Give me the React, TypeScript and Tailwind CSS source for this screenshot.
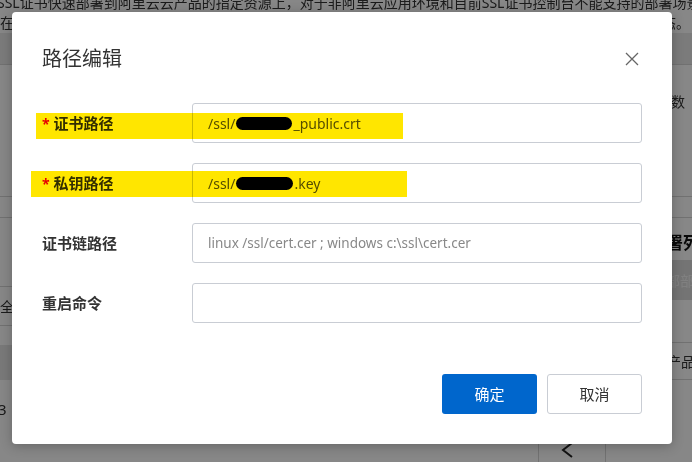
import React from "react";

const fontStack = "font-['Noto_Sans','Noto_Sans_CJK_SC',sans-serif]";

const BackgroundPage = () => {
  return (
    <div className="flex h-full flex-col text-[#333]">
      <div className="-mt-[7px] flex flex-col text-[14px] leading-[20px]">
        <p className="-ml-[3px] whitespace-nowrap">
          SSL证书快速部署到阿里云云产品的指定资源上，对于非阿里云应用环境和目前SSL证书控制台不能支持的部署场景
        </p>
        <div className="flex justify-between whitespace-nowrap pr-[2px]">
          <span>在</span>
          <span>状态。</span>
        </div>
      </div>
      <div className="h-[32px] border-b border-[#d6d6d6] bg-[#e9e9e9]" />
      <div className="flex flex-1">
        {/* left strip */}
        <div className="flex w-[12px] flex-col text-[14px] text-[#333]">
          <div className="h-[132px] border-b border-[#d6d6d6]" />
          <div className="h-[21px] border-b border-[#d6d6d6]" />
          <div className="h-[69px] border-b border-[#d6d6d6]" />
          <div className="flex h-[39px] items-center overflow-hidden border-b border-[#d6d6d6] whitespace-nowrap">
            全
          </div>
          <div className="h-[19px]" />
          <div className="h-[35px] bg-[#e4e4e4]" />
          <div className="flex h-[40px] items-end overflow-hidden text-[15px] whitespace-nowrap">
            <span className="-ml-[2px]">3</span>
          </div>
        </div>
        {/* middle, hidden by dialog */}
        <div className="flex flex-1 flex-col justify-end pr-[66px]">
          <div className="flex justify-end">
            <div className="flex h-[32px] w-[68px] items-start justify-center border-x border-[#d6d6d6] pt-[12px]">
              <svg width="14" height="16" viewBox="0 0 14 16" className="-ml-[10px]">
                <polyline points="12,1 3,8 12,15" fill="none" stroke="#222" strokeWidth="2" />
              </svg>
            </div>
          </div>
        </div>
        {/* right strip */}
        <div className="flex w-[20px] flex-col overflow-hidden whitespace-nowrap text-[14px] text-[#333]">
          <div className="flex h-[132px] items-start border-b border-[#d6d6d6] pt-[26px]">
            <span className="-ml-[1px]">数</span>
          </div>
          <div className="h-[21px] border-b border-[#d6d6d6]" />
          <div className="flex h-[42px] items-end pb-[5px] text-[17px] font-bold text-[#111]">
            <span className="-ml-[6px]">署列</span>
          </div>
          <div className="flex h-[40px] items-center bg-[#dcdcdc] text-[#f2f2f2]">
            <span className="-ml-[6px]">部部</span>
          </div>
          <div className="h-[43px] border-b border-[#d6d6d6]" />
          <div className="flex h-[37px] items-center border-b border-[#d6d6d6]">
            <span className="-ml-[5px]">产品</span>
          </div>
        </div>
      </div>
    </div>
  );
};

const Field = ({
  label,
  required,
  children,
}: {
  label: string;
  required?: boolean;
  children: React.ReactNode;
}) => (
  <div className="flex h-[40px] items-center">
    <div className="flex w-[150px] items-center text-[15px] font-bold text-[#333]">
      {required && <span className="mr-[4px] text-[14px] text-[#e60012]">*</span>}
      {label}
    </div>
    <div className="flex h-[40px] flex-1 items-center rounded-[3px] border border-[#c9cdd4] pl-[15px] text-[14px] whitespace-nowrap">
      {children}
    </div>
  </div>
);

const Redact = ({ w }: { w: number }) => (
  <span
    className="mx-[1px] inline-block h-[13px] rounded-full bg-black"
    style={{ width: w }}
  />
);

const PathDialog = () => {
  return (
    <div className="absolute left-[12px] top-[12px] flex h-[432px] w-[660px] flex-col rounded-[4px] bg-white shadow-[0_2px_12px_rgba(0,0,0,0.25)]">
      <div className="mt-[33px] flex h-[28px] items-center justify-between pl-[30px] pr-[33px]">
        <h2 className="text-[20px] font-normal text-[#333]">路径编辑</h2>
        <svg width="14" height="14" viewBox="0 0 14 14">
          <path d="M1 1 L13 13 M13 1 L1 13" stroke="#666" strokeWidth="1.3" />
        </svg>
      </div>

      <div className="mt-[30px] flex flex-col gap-[20px] pl-[30px] pr-[30px]">
        <Field label="证书路径" required>
          <span className="text-[#555]">/ssl/</span>
          <Redact w={56} />
          <span className="text-[#555]">_public.crt</span>
        </Field>
        <Field label="私钥路径" required>
          <span className="text-[#555]">/ssl/</span>
          <Redact w={57} />
          <span className="text-[#555]">.key</span>
        </Field>
        <Field label="证书链路径">
          <span className="text-[13.5px] text-[#888]">linux /ssl/cert.cer ; windows c:\ssl\cert.cer</span>
        </Field>
        <Field label="重启命令">
          <span />
        </Field>
      </div>

      <div className="mt-[51px] flex justify-end gap-[10px] pr-[30px]">
        <button className="h-[40px] w-[95px] rounded-[3px] bg-[#0066cc] text-[15px] text-white">
          确定
        </button>
        <button className="h-[40px] w-[95px] rounded-[3px] border border-[#c9cdd4] bg-white text-[15px] text-[#333]">
          取消
        </button>
      </div>

      {/* yellow highlighter marks on the screenshot */}
      <div className="pointer-events-none absolute left-[24px] top-[101px] h-[26px] w-[367px] bg-[#ffe600] mix-blend-multiply" />
      <div className="pointer-events-none absolute left-[19px] top-[159px] h-[26px] w-[376px] bg-[#ffe600] mix-blend-multiply" />
    </div>
  );
};

export default function App() {
  return (
    <div className={`relative h-[462px] w-[692px] overflow-hidden bg-white ${fontStack}`}>
      <BackgroundPage />
      <div className="absolute inset-0 bg-black/[0.47]" />
      <PathDialog />
    </div>
  );
}
